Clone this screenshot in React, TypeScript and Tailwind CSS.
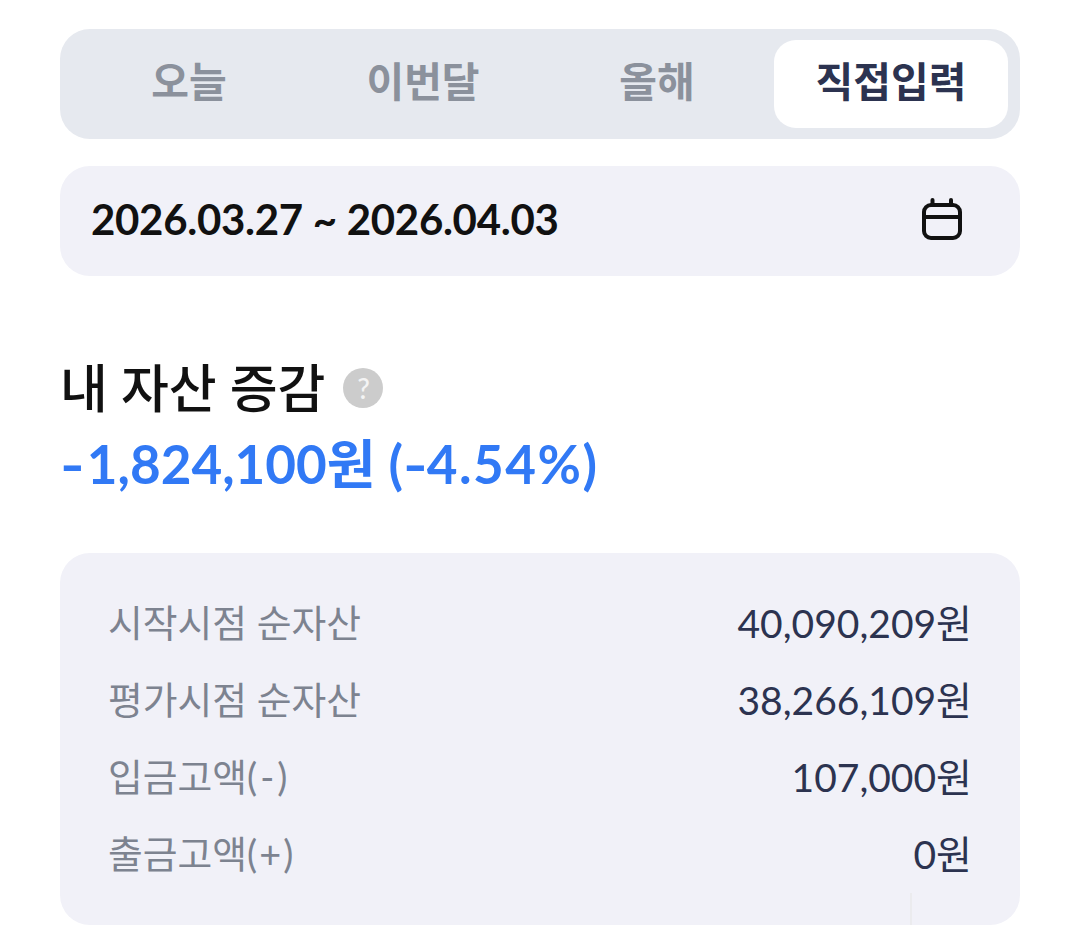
import React from 'react';

const fontStack = "font-['Lato','Noto_Sans_CJK_KR',sans-serif]";

const tabs = ['오늘', '이번달', '올해', '직접입력'];

const rows = [
  { label: '시작시점 순자산', value: '40,090,209원' },
  { label: '평가시점 순자산', value: '38,266,109원' },
  { label: <>입금고액(<span className="mx-[3px]">-</span>)</>, value: '107,000원' },
  { label: <>출금고액(<span className="mx-[2px]">+</span>)</>, value: '0원' },
];

const CalendarIcon = () => (
  <svg className="-mt-1" width="42" height="44" viewBox="0 0 42 44" fill="none" stroke="#111111" strokeWidth="4" strokeLinecap="round">
    <rect x="3" y="8" width="36" height="33" rx="7" />
    <path d="M3 20H39" />
    <path d="M11.5 3V7" />
    <path d="M30 3V7" />
  </svg>
);

const App: React.FC = () => {
  return (
    <div className={`${fontStack} w-[1080px] h-[949px] bg-white px-[60px] pt-[29px] overflow-hidden`}>
      <div className="grid grid-cols-4 h-[110px] rounded-[30px] bg-[#e6e9ef] px-3 py-[11px]">
        {tabs.map((tab, i) => (
          <div
            key={tab}
            className={
              i === 3
                ? 'flex items-center justify-center rounded-[22px] bg-white pb-1 text-[41px] font-bold text-[#2c3350]'
                : 'flex items-center justify-center rounded-[22px] pb-1 text-[41px] font-bold text-[#8b919c]'
            }
          >
            {tab}
          </div>
        ))}
      </div>

      <div className="mt-[27px] flex h-[110px] items-center justify-between rounded-[30px] bg-[#f1f1f8] pl-[31px] pr-[57px]">
        <span className="-mt-1 text-[42px] font-bold tracking-[-0.3px] text-[#111111]">2026.03.27 ~ 2026.04.03</span>
        <CalendarIcon />
      </div>

      <div className="mt-[79px] flex h-[66px] items-center">
        <span className="text-[52px] font-medium text-[#111111]">내 자산 증감</span>
        <span className="ml-[18px] flex h-10 w-10 items-center justify-center rounded-full bg-[#cccccc] text-[28px] font-medium text-[#f4f4f4]">?</span>
      </div>

      <div className="mt-[10px] h-[66px] text-[53px] font-bold leading-[66px] text-[#3179f5]">
        <span className="mr-[7px] inline-block origin-left scale-x-[1.25]">-</span>1,824,100원 (<span className="mr-[4px] inline-block origin-left scale-x-[1.25]">-</span><span className="tracking-[1.5px]">4.54%)</span>
      </div>

      <div className="relative mt-[56px] flex h-[372px] flex-col justify-center rounded-[30px] bg-[#f1f1f8] pl-[48px] pr-[48px]">
        {rows.map((row) => (
          <div key={row.value} className="flex h-[77px] items-center justify-between">
            <span className="text-[37.8px] text-[#7d8390]">{row.label}</span>
            <span className="text-[39px] text-[#2c3350]">{row.value}</span>
          </div>
        ))}
        <div className="absolute bottom-0 left-[850px] h-[32px] w-[2px] bg-[#ebebee]" />
      </div>
    </div>
  );
};

export default App;
